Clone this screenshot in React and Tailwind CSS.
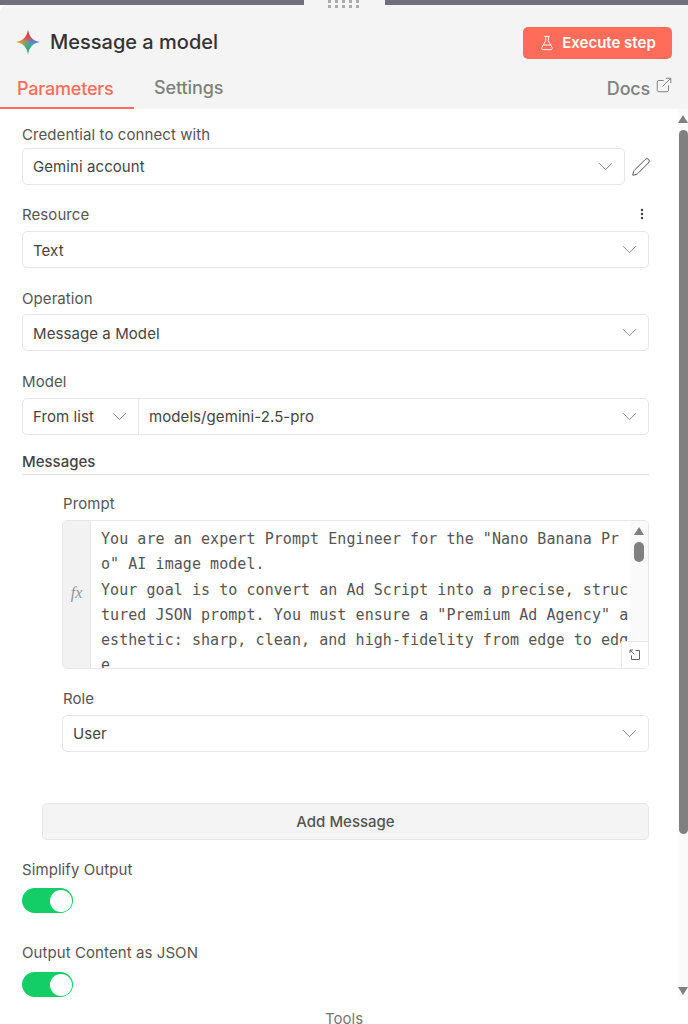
import { ChevronDown, ExternalLink, FlaskConical, Pen, EllipsisVertical } from 'lucide-react';

const labelCls = 'block h-[18px] text-[15px] leading-[20px] tracking-[0.08px] text-[#555]';
const boxCls = 'flex h-[37px] items-center rounded-[5px] border border-[#e6e6e6] bg-white text-[15px] tracking-[0.08px] text-[#444]';

const STAR = 'M12 0C12.6 6.4 17.6 11.4 24 12C17.6 12.6 12.6 17.6 12 24C11.4 17.6 6.4 12.6 0 12C6.4 11.4 11.4 6.4 12 0Z';

function GeminiMark() {
  return (
    <svg width="24" height="24" viewBox="0 0 24 24">
      <defs>
        <linearGradient id="gm-base" x1="0" y1="0" x2="1" y2="0">
          <stop offset="0" stopColor="#f6a821" />
          <stop offset="0.25" stopColor="#e9a030" />
          <stop offset="0.6" stopColor="#4a8cf2" />
          <stop offset="1" stopColor="#3f8cf3" />
        </linearGradient>
        <linearGradient id="gm-top" x1="0" y1="0" x2="0" y2="1">
          <stop offset="0" stopColor="#e8433a" />
          <stop offset="0.25" stopColor="#e8433a" />
          <stop offset="0.55" stopColor="#e8433a" stopOpacity="0" />
        </linearGradient>
        <linearGradient id="gm-bottom" x1="0" y1="1" x2="0" y2="0">
          <stop offset="0" stopColor="#2fb36b" />
          <stop offset="0.25" stopColor="#2fb36b" />
          <stop offset="0.55" stopColor="#2fb36b" stopOpacity="0" />
        </linearGradient>
      </defs>
      <path d={STAR} fill="url(#gm-base)" />
      <path d={STAR} fill="url(#gm-top)" />
      <path d={STAR} fill="url(#gm-bottom)" />
    </svg>
  );
}

function Chevron() {
  return <ChevronDown size={25} strokeWidth={0.9} className="shrink-0 text-[#808080]" />;
}

function Select({ value, className = '', textCls = 'pt-[1px]' }) {
  return (
    <div className={`${boxCls} justify-between pl-[10px] pr-[6px] ${className}`}>
      <span className={textCls}>{value}</span>
      <Chevron />
    </div>
  );
}

function Toggle() {
  return (
    <div className="flex h-[25px] w-[51px] items-center justify-end rounded-full bg-[#13ce66] pr-[1px]">
      <div className="h-[22px] w-[22px] rounded-full bg-white" />
    </div>
  );
}

function ScrollArrow({ down, className = '' }) {
  return (
    <svg width="10" height="8" viewBox="0 0 10 8" className={`shrink-0 ${className}`}>
      <path d={down ? 'M0 0H10L5 8Z' : 'M0 8H10L5 0Z'} fill="#808080" />
    </svg>
  );
}

function PromptEditor() {
  return (
    <div className="relative flex h-[149px] overflow-hidden rounded-[5px] border border-[#e6e6e6] bg-white">
      <div className="flex w-[28px] shrink-0 items-center justify-center border-r border-[#e6e6e6] bg-[#f2f2f2] pb-[4px] font-['Liberation_Serif',serif] text-[16px] italic text-[#8a94a6]">
        fx
      </div>
      <div className="h-full min-w-0 flex-1 overflow-hidden whitespace-pre pl-[10px] pt-[6px] font-['DejaVu_Sans_Mono',monospace] text-[15px] leading-[25.3px] tracking-[0.06px] text-[#555]">
        <div>You are an expert Prompt Engineer for the "Nano Banana Pr</div>
        <div>o" AI image model.</div>
        <div>Your goal is to convert an Ad Script into a precise, struc</div>
        <div>tured JSON prompt. You must ensure a "Premium Ad Agency" a</div>
        <div>esthetic: sharp, clean, and high-fidelity from edge to edg</div>
        <div>e</div>
      </div>
      <div className="absolute right-0 top-0 flex h-full w-[18px] flex-col items-center bg-[#fafafa] pt-[6px]">
        <ScrollArrow />
        <div className="mt-[7px] h-[20px] w-[10px] rounded-full bg-[#808080]" />
      </div>
      <div className="absolute bottom-0 right-0 flex h-[27px] w-[27px] items-center justify-center border-l border-t border-[#e6e6e6] bg-white">
        <svg width="12" height="12" viewBox="0 0 12 12" fill="none" stroke="#666" strokeWidth="1">
          <path d="M1 4V1H4M1 1L5.5 5.5" />
          <path d="M6.5 1.5H10.5V10.5H2.5V6.5" />
        </svg>
      </div>
    </div>
  );
}

export default function App() {
  return (
    <div className="relative flex h-[1024px] w-[688px] flex-col overflow-hidden bg-white font-['Inter',sans-serif]">
      <div className="flex h-[5px] shrink-0 justify-between bg-[#f4f4f4]">
        <div className="w-[304px] bg-[#706e7c]" />
        <div className="w-[303px] bg-[#706e7c]" />
      </div>
      <div className="absolute left-[328px] top-0 grid grid-cols-5 gap-x-[4px] gap-y-[2px]">
        {Array.from({ length: 10 }).map((_, i) => (
          <span key={i} className="h-[3px] w-[3px] bg-[#aaa]" />
        ))}
      </div>

      <header className="h-[104px] shrink-0 rounded-tl-[8px] bg-[#f4f4f4]">
        <div className="flex h-[67px] items-center justify-between pl-[16px] pr-[16px] pt-[7px]">
          <div className="flex items-center gap-[10px]">
            <GeminiMark />
            <span className="text-[20px] font-medium text-[#333]">Message a model</span>
          </div>
          <button className="mt-[2px] flex h-[32px] w-[149px] items-center justify-center gap-[7px] rounded-[5px] bg-[#ff6d5a] text-[15px] font-semibold text-white">
            <FlaskConical size={16} strokeWidth={1.4} />
            Execute step
          </button>
        </div>
        <div className="flex h-[37px] items-start justify-between">
          <div className="flex">
            <div className="h-[37px] w-[134px] border-b-2 border-[#ff6d5a] pl-[17px] pt-[4px] text-[18px] font-medium leading-[25px] tracking-[-0.2px] text-[#ff6d5a]">
              Parameters
            </div>
            <div className="pl-[20px] pt-[3px] text-[18px] font-medium leading-[25px] tracking-[-0.1px] text-[#808080]">Settings</div>
          </div>
          <div className="flex items-start gap-[5px] pr-[15px] pt-[4px] text-[18px] font-medium leading-[25px] tracking-[-0.2px] text-[#808080]">
            Docs
            <ExternalLink size={18} strokeWidth={1.3} />
          </div>
        </div>
      </header>

      <main className="relative min-h-0 flex-1 overflow-hidden pl-[22px] pt-[16px]">
        <div className="w-[627px]">
          <label className={labelCls}>Credential to connect with</label>
          <div className="mt-[5px] flex items-center">
            <Select value="Gemini account" className="w-[603px] shrink-0" />
            <Pen size={20} strokeWidth={1.2} className="ml-[6px] shrink-0 text-[#555]" />
          </div>

          <div className="mt-[20px] flex h-[18px] items-center justify-between">
            <label className={labelCls}>Resource</label>
            <EllipsisVertical size={14} strokeWidth={2.2} className="text-[#444]" />
          </div>
          <Select value="Text" className="mt-[8px]" textCls="pt-[3px]" />

          <label className={`${labelCls} mt-[21px]`}>Operation</label>
          <Select value="Message a Model" className="mt-[7px]" textCls="pt-[3px]" />

          <label className={`${labelCls} mt-[21px]`}>Model</label>
          <div className={`${boxCls} mt-[8px]`}>
            <div className="flex h-full w-[116px] items-center justify-between border-r border-[#e6e6e6] pl-[10px] pr-[6px]">
              <span className="pt-[1px]">From list</span>
              <Chevron />
            </div>
            <div className="flex flex-1 items-center justify-between pl-[10px] pr-[6px]">
              <span className="pt-[1px]">models/gemini-2.5-pro</span>
              <Chevron />
            </div>
          </div>

          <div className="mt-[17px] h-[23px] border-b border-[#e0e0e0] text-[15px] font-medium leading-[20px] text-[#444]">
            Messages
          </div>

          <div className="ml-[40px]">
            <label className={`${labelCls} mt-[19px] pl-[1px]`}>Prompt</label>
            <div className="mt-[8px]"><PromptEditor /></div>
            <label className={`${labelCls} mt-[20px] pl-[1px]`}>Role</label>
            <Select value="User" className="mt-[8px]" />
          </div>

          <button className="ml-[20px] mt-[51px] h-[37px] w-[607px] rounded-[5px] border border-[#e6e6e6] bg-[#f4f4f4] pt-[2px] text-[15px] font-medium text-[#555]">
            Add Message
          </button>

          <label className={`${labelCls} mt-[20px]`}>Simplify Output</label>
          <div className="mt-[10px]"><Toggle /></div>
          <label className={`${labelCls} mt-[30px]`}>Output Content as JSON</label>
          <div className="mt-[11px]"><Toggle /></div>
          <div className="mt-[12px] pl-[303px] text-[15px] leading-[20px] text-[#777]">Tools</div>
        </div>

        {/* page scrollbar */}
        <div className="absolute bottom-[24px] right-0 top-0 flex w-[10px] flex-col items-center bg-[#fafafa] pt-[6px]">
          <ScrollArrow />
          <div className="mt-[7px] h-[704px] w-[9px] shrink-0 rounded-full bg-[#808080]" />
          <ScrollArrow down className="mb-[5px] mt-auto" />
        </div>
      </main>
    </div>
  );
}
